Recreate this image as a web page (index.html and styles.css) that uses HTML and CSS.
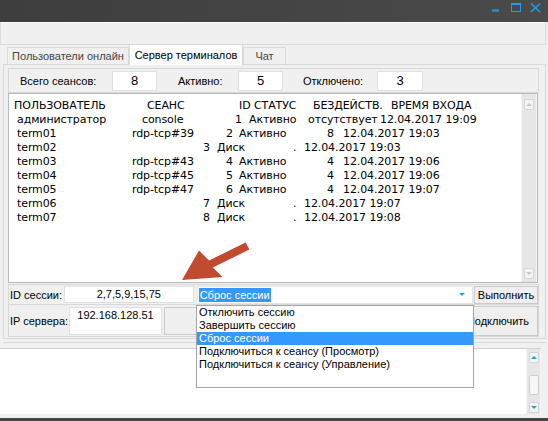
FILE: index.html
```html
<!DOCTYPE html>
<html lang="ru">
<head>
<meta charset="utf-8">
<title>Сервер терминалов</title>
<link rel="stylesheet" href="styles.css">
</head>
<body>
<div class="window">
  <header class="titlebar">
    <svg class="winctl" width="60" height="22" viewBox="0 0 60 22">
      <rect x="7" y="9.5" width="7" height="2" fill="#1ba1e2"/>
      <rect x="26.5" y="3.5" width="9" height="8" fill="none" stroke="#1ba1e2" stroke-width="1"/>
      <rect x="26" y="3" width="10" height="2" fill="#1ba1e2"/>
      <path d="M46 3.5 L55 12 M55 3.5 L46 12" stroke="#1ba1e2" stroke-width="1.6" fill="none"/>
    </svg>
  </header>
  <div class="toolbar"></div>
  <div class="tabctl">
    <div class="tabstrip">
      <div class="tab t1">Пользователи онлайн</div>
      <div class="tab t2 active">Сервер терминалов</div>
      <div class="tab t3">Чат</div>
    </div>
    <div class="tabpage">
      <div class="stats">
        <span class="lbl l1">Всего сеансов:</span><span class="num">8</span>
        <span class="lbl l2">Активно:</span><span class="num">5</span>
        <span class="lbl l3">Отключено:</span><span class="num n3">3</span>
      </div>
      <div class="listbox">
        <div class="rows">
          <div class="row hdr"><span>ПОЛЬЗОВАТЕЛЬ</span><span>СЕАНС</span><span>ID</span><span>СТАТУС</span><span>БЕЗДЕЙСТВ.</span><span>ВРЕМЯ ВХОДА</span></div>
          <div class="row adm"><span>администратор</span><span>console</span><span>1</span><span>Активно</span><span>отсутствует</span><span>12.04.2017 19:09</span></div>
          <div class="row act"><span>term01</span><span>rdp-tcp#39</span><span>2</span><span>Активно</span><span>8</span><span>12.04.2017 19:03</span></div>
          <div class="row dsc"><span>term02</span><span>3</span><span>Диск</span><span>.</span><span>12.04.2017 19:03</span></div>
          <div class="row act"><span>term03</span><span>rdp-tcp#43</span><span>4</span><span>Активно</span><span>4</span><span>12.04.2017 19:06</span></div>
          <div class="row act"><span>term04</span><span>rdp-tcp#45</span><span>5</span><span>Активно</span><span>4</span><span>12.04.2017 19:06</span></div>
          <div class="row act"><span>term05</span><span>rdp-tcp#47</span><span>6</span><span>Активно</span><span>4</span><span>12.04.2017 19:07</span></div>
          <div class="row dsc"><span>term06</span><span>7</span><span>Диск</span><span>.</span><span>12.04.2017 19:07</span></div>
          <div class="row dsc"><span>term07</span><span>8</span><span>Диск</span><span>.</span><span>12.04.2017 19:08</span></div>
        </div>
        <div class="vscroll list-scroll">
          <div class="sbtn"><i class="tri up off"></i></div>
          <div class="strack"></div>
          <div class="sbtn"><i class="tri down off"></i></div>
        </div>
      </div>
      <div class="idrow">
        <span class="idlabel">ID сессии:</span>
        <div class="idbox">2,7,5,9,15,75</div>
        <div class="combo"><span class="sel">Сброс сессии</span><i class="tri down combo-arrow"></i></div>
        <div class="btn run">Выполнить</div>
      </div>
      <div class="iprow">
        <span class="iplabel">IP сервера:</span>
        <div class="ipbox">192.168.128.51</div>
        <div class="btn blank"></div>
        <div class="btn connect">Подключить</div>
      </div>
    </div>
  </div>
  <div class="log">
    <div class="logtext"></div>
    <div class="vscroll log-scroll">
      <div class="sbtn"><i class="tri up"></i></div>
      <div class="strack"><div class="thumb"></div></div>
      <div class="sbtn"><i class="tri down"></i></div>
    </div>
  </div>
</div>

<ul class="droplist">
  <li class="opt">Отключить сессию</li>
  <li class="opt">Завершить сессию</li>
  <li class="opt hl">Сброс сессии</li>
  <li class="opt">Подключиться к сеансу (Просмотр)</li>
  <li class="opt">Подключиться к сеансу (Управление)</li>
</ul>

<svg class="pointer" width="548" height="421" viewBox="0 0 548 421">
  <polygon points="182,280 199,250.5 209.1,260.5 245.6,242.5 249.4,249.5 212.9,267.5 222.5,277" fill="#c24a30"/>
</svg>
</body>
</html>
```

FILE: styles.css
```css
* { box-sizing: border-box; margin: 0; padding: 0; }
html, body { width: 548px; height: 421px; overflow: hidden; }
body {
  position: relative;
  background: #f0f0f0;
  font-family: "Liberation Sans", Arial, sans-serif;
  font-size: 11px;
  color: #000;
}

.window {
  height: 421px;
  display: flex;
  flex-direction: column;
  border-bottom: 3px solid #454545;
}

/* title bar */
.titlebar {
  height: 22px;
  flex: none;
  display: flex;
  justify-content: flex-end;
  padding-right: 3px;
  background: linear-gradient(90deg, #3e3e3e, #4a4a4a);
}
.winctl { display: block; }

.toolbar {
  height: 23px;
  flex: none;
  margin-right: 2px;
  border: 1px solid #dadada;
  border-top-color: #fbfbfb;
}

/* tab control */
.tabctl {
  flex: none;
  margin: 0 2px 0 3px;
  padding-bottom: 3px;
  border-bottom: 1px solid #dadada;
}
.tabstrip {
  height: 19px;
  display: flex;
  align-items: flex-end;
  padding-left: 4px;
}
.tab {
  height: 17px;
  border: 1px solid #d9d9d9;
  border-bottom: none;
  background: #f0f0f0;
  color: #444;
  text-align: center;
  padding-top: 2px;
  line-height: 13px;
  white-space: nowrap;
}
.t1 { width: 122px; }
.t2 { width: 114px; }
.t3 { width: 43px; }
.tab.active {
  height: 21px;
  margin-bottom: -1px;
  background: #fcfcfc;
  color: #000;
  padding-top: 4px;
  position: relative;
  z-index: 1;
}

.tabpage {
  height: 275px;
  border: 1px solid #d9d9d9;
  padding: 3px 6px 0 4px;
}

/* statistics */
.stats {
  height: 25px;
  border: 1px solid #d8d8d8;
  display: flex;
  align-items: center;
}
.lbl { white-space: nowrap; }
.l1 { margin-left: 11px; width: 92px; }
.l2 { margin-left: 21px; width: 60px; }
.l3 { margin-left: 20px; width: 74px; }
.num {
  width: 45px;
  height: 20px;
  background: #fff;
  border: 1px solid #e0e0e0;
  text-align: center;
  font-size: 13px;
  line-height: 18px;
}
.n3 { width: 46px; }

/* list */
.listbox {
  width: 530px;
  height: 190px;
  border: 1px solid #b9b9b9;
  background: #fff;
  display: flex;
}
.rows {
  flex: 1;
  padding-top: 5px;
  font-family: "DejaVu Sans", Verdana, sans-serif;
  font-size: 11px;
  letter-spacing: -0.1px;
  line-height: 14px;
  white-space: nowrap;
  overflow: hidden;
}
.row { display: grid; padding-left: 8px; }
.row.hdr { padding-left: 5px; grid-template-columns: 133px 92px 15px 59px 78px auto; }
.row.adm { grid-template-columns: 125px 93px 14px 59px 72px auto; }
.row.act { grid-template-columns: 115px 94px 13px 88px 16px auto; }
.row.dsc { grid-template-columns: 186px 14px 76px 11px auto; }

/* scrollbars */
.vscroll {
  flex: none;
  background: #e6e6e6;
  border-left: 1px solid #f5f5f5;
  border-right: 1px solid #f5f5f5;
  display: flex;
  flex-direction: column;
  align-items: center;
}
.list-scroll { width: 16px; padding: 5px 0 3px; }
.log-scroll { width: 15px; padding: 3px 0 1px; }
.sbtn {
  width: 10px;
  height: 11px;
  background: #f4f4f4;
  border: 1px solid #d6d6d6;
  border-radius: 2px;
  display: flex;
  align-items: center;
  justify-content: center;
}
.strack { flex: 1; width: 10px; display: flex; flex-direction: column; justify-content: center; }
.thumb {
  height: 20px;
  background: #f7f7f7;
  border: 1px solid #d0d0d0;
  border-radius: 2px;
  margin-top: 4px;
}
.tri { display: block; width: 0; height: 0; border-left: 3px solid transparent; border-right: 3px solid transparent; }
.tri.up { border-bottom: 3px solid #1ba1e2; }
.tri.down { border-top: 3px solid #1ba1e2; }
.tri.up.off { border-bottom-color: #c8c8c8; }
.tri.down.off { border-top-color: #c8c8c8; }

/* id row */
.idrow {
  margin-top: 1px;
  height: 21px;
  display: flex;
  align-items: center;
  padding-left: 1px;
  border: 1px solid #d8d8d8;
}
.idlabel { width: 54px; white-space: nowrap; }
.idbox {
  width: 130px;
  height: 17px;
  background: #fff;
  border: 1px solid #e0e0e0;
  text-align: center;
  line-height: 15px;
}
.combo {
  margin-left: 3px;
  width: 277px;
  height: 18px;
  background: #fff;
  border: 1px solid #e3e3e3;
  display: flex;
  align-items: center;
  padding-left: 1px;
}
.sel { background: #3399ff; color: #fff; padding: 0 1px; line-height: 14px; }
.combo-arrow { margin-left: auto; margin-right: 7px; }
.btn {
  background: #efefef;
  border: 1px solid #cacaca;
  text-align: center;
  white-space: nowrap;
}
.run { margin-left: 1px; width: 64px; height: 18px; line-height: 16px; }

/* ip row */
.iprow {
  height: 32px;
  display: flex;
  align-items: center;
  padding-left: 1px;
  border: 1px solid #d8d8d8;
  border-top: none;
}
.iplabel { width: 59px; white-space: nowrap; }
.ipbox {
  width: 93px;
  height: 28px;
  background: #fff;
  border: 1px solid #e0e0e0;
  text-align: center;
  line-height: 14px;
}
.blank { margin-left: 2px; width: 140px; height: 28px; }
.connect { margin-left: auto; width: 80px; height: 30px; line-height: 28px; }

/* log */
.log {
  flex: none;
  margin-top: 5px;
  width: 541px;
  height: 66px;
  display: flex;
  background: #fff;
  border-top: 1px solid #d0d0d0;
}
.logtext { flex: 1; }

/* dropdown overlay */
.droplist {
  position: absolute;
  left: 196px;
  top: 305px;
  width: 278px;
  height: 83px;
  list-style: none;
  background: #fff;
  border: 1px solid #a5a5a5;
  z-index: 5;
}
.opt { height: 13px; line-height: 13px; padding-left: 2px; white-space: nowrap; }
.opt.hl { background: #3399ff; color: #fff; }

.pointer { position: absolute; left: 0; top: 0; pointer-events: none; z-index: 6; }
```
